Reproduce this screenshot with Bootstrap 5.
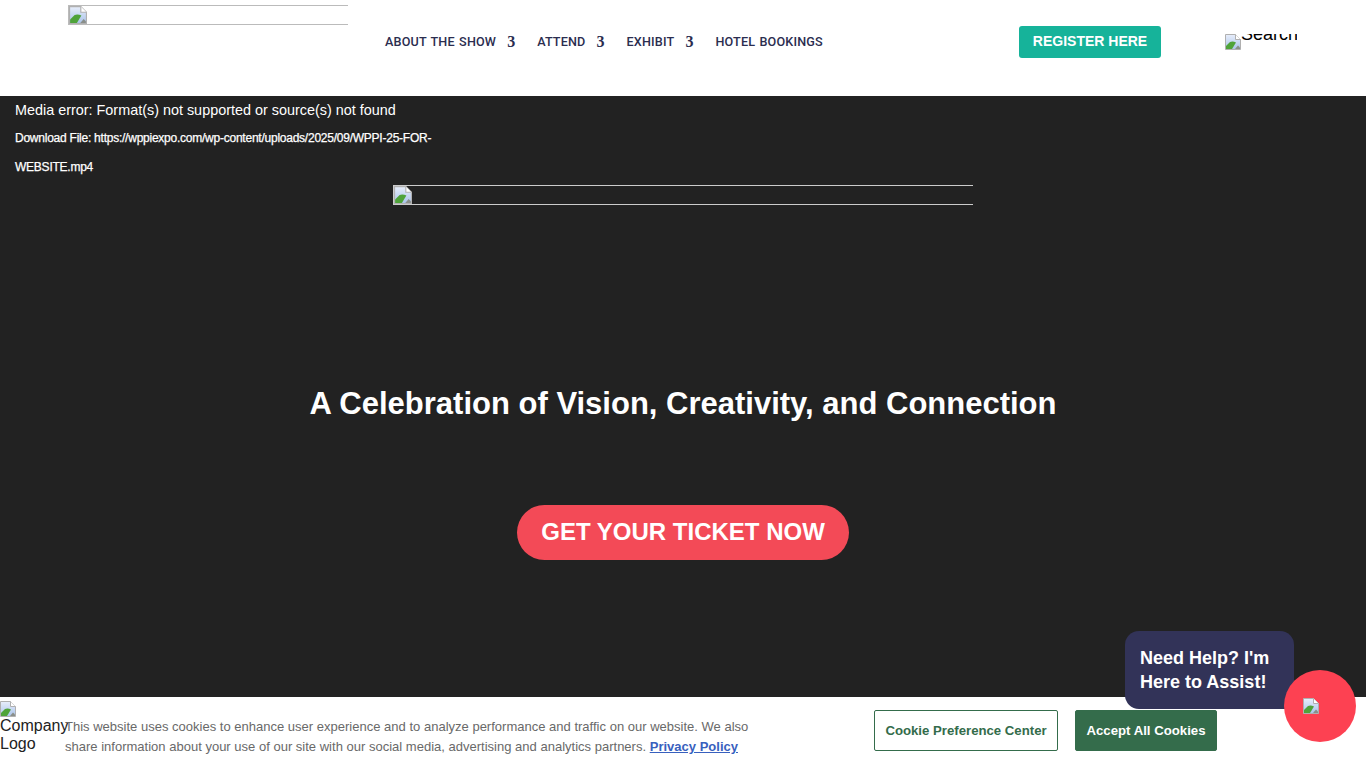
<!DOCTYPE html>
<html lang="en">
<head>
<meta charset="utf-8">
<title>WPPI</title>
<link href="https://cdn.jsdelivr.net/npm/bootstrap@5.3.0/dist/css/bootstrap.min.css" rel="stylesheet">
<style>
html,body{height:100%;overflow:hidden}
body{font-family:"Liberation Sans",Arial,sans-serif;background:#222;color:#000}
.site-head{height:96px;background:#fff}
.logo-slot{width:280px;margin-left:68px;margin-top:5px;height:20px;border:1px solid #bbb;border-right:0;flex:none;display:flex}
.top-links{margin-left:37px;margin-top:34px;height:16px}
.top-links a{font-family:Roboto,"Liberation Sans",sans-serif;font-weight:500;font-size:12.6px;color:#2b2d4f;text-decoration:none;line-height:16px;white-space:nowrap;letter-spacing:.18px;word-spacing:1px}
.caret-num{font-family:"Liberation Serif",serif;font-weight:700;font-size:16px;color:#2b2d4f;line-height:16px;margin-left:11px;margin-right:22px;width:8px}
.reg-btn{position:absolute;left:1019px;top:26px;width:142px;height:32px;background:#16b39a;color:#fff;font-weight:700;font-size:14px;border-radius:3px;border:0;padding:0 0 2px;line-height:28px;text-align:center}
.search-slot{position:absolute;left:1225px;top:34px;width:72px;height:16px;overflow:hidden;display:flex}
.search-word{font-size:18px;line-height:18px;margin-top:-9px;color:#000}
.hero-area{height:601px;background:#222;position:relative;color:#fff}
.media-err{padding:6px 0 0 15px;font-size:14.4px;line-height:17px;height:28px}
.dl-file{padding-left:15px;width:445px;font-size:12px;line-height:29px;letter-spacing:-.24px;-webkit-text-stroke:.25px #fff}
.hero-pic{width:580px;height:20px;margin:3px auto 0;border:1px solid #ccc;border-right:0;display:flex}
.hero-title{font-size:31px;font-weight:700;line-height:40px;margin:179px 0 0;text-align:center}
.hero-cta{width:332px;height:55px;border-radius:28px;background:#f34a57;color:#fff;font-weight:700;font-size:24px;border:0;padding:0 0 1px;line-height:52px;display:block;margin:81px auto 0;text-align:center}
.cookie-bar{position:fixed;left:0;right:0;bottom:0;height:71px;background:#fff;color:#333}
.co-logo{width:65px;font-size:16px;line-height:18px;padding-top:4px;color:#222;flex:none}
.co-logo svg{display:block}
.co-copy{margin-top:20px;width:700px;font-size:13px;line-height:20px;letter-spacing:.008px;color:#696969;flex:none}
.co-copy a{color:#3860be;font-weight:700}
.co-btn{position:absolute;top:13px;height:41px;font-size:13.2px;font-weight:700;border-radius:2px;padding:0;text-align:center}
.co-light{left:874px;width:184px;background:#fff;color:#346c4b;border:1px solid #346c4b}
.co-dark{left:1075px;width:142px;background:#346c4b;color:#fff;border:1px solid #346c4b}
.help-tip{position:fixed;left:1125px;top:631px;width:169px;height:78px;background:#323358;color:#fff;font-weight:700;font-size:18px;line-height:24px;border-radius:14px 14px 0 14px;padding:15px 0 0 15px}
.help-fab{position:fixed;left:1284px;top:670px;width:72px;height:72px;border-radius:50%;background:#fd4152;display:flex;padding:28px 0 0 19px}
.help-fab svg{flex:none}
</style>
</head>
<body>
<svg width="0" height="0" class="d-block" aria-hidden="true"><defs>
<linearGradient id="skyfill" x1="0" y1="0" x2="0" y2="1"><stop offset="0" stop-color="#e8eefb"/><stop offset="1" stop-color="#a9c3ea"/></linearGradient>
<symbol id="brokenpic" viewBox="0 0 16 16">
<path d="M.5.5H10.500L15.500 5.500V15.500H.5Z" fill="url(#skyfill)" stroke="#b0b0b0"/>
<path d="M10.500.5V5.500H15.500" fill="#fff" stroke="#b0b0b0"/>
<path d="M1 15V12L5 8C7 7 9 7.500 11 8.500L7 15Z" fill="#4fa33a"/>
<path d="M10 15L13 11.500L15 13.500V15Z" fill="#8a8f8a"/>
</symbol></defs></svg>

<header class="site-head d-flex position-relative">
  <div class="logo-slot"><svg width="18" height="18"><use href="#brokenpic"/></svg></div>
  <nav class="top-links d-flex align-items-center">
    <a href="#">ABOUT THE SHOW</a><span class="caret-num">3</span>
    <a href="#">ATTEND</a><span class="caret-num">3</span>
    <a href="#">EXHIBIT</a><span class="caret-num">3</span>
    <a href="#">HOTEL BOOKINGS</a>
  </nav>
  <button class="reg-btn" type="button">REGISTER HERE</button>
  <div class="search-slot"><svg width="16" height="16" class="flex-shrink-0"><use href="#brokenpic"/></svg><span class="search-word">Search</span></div>
</header>

<main class="hero-area">
  <div class="media-err">Media error: Format(s) not supported or source(s) not found</div>
  <div class="dl-file">Download File: https://wppiexpo.com/wp-content/uploads/2025/09/WPPI-25-FOR-WEBSITE.mp4</div>
  <div class="hero-pic"><svg width="18" height="18"><use href="#brokenpic"/></svg></div>
  <h1 class="hero-title">A Celebration of Vision, Creativity, and Connection</h1>
  <button class="hero-cta" type="button">GET YOUR TICKET NOW</button>
</main>

<div class="cookie-bar d-flex">
  <div class="co-logo"><svg width="16" height="16"><use href="#brokenpic"/></svg>Company Logo</div>
  <p class="co-copy">This website uses cookies to enhance user experience and to analyze performance and traffic on our website. We also share information about your use of our site with our social media, advertising and analytics partners. <a href="#">Privacy Policy</a></p>
  <button class="co-btn co-light" type="button">Cookie Preference Center</button>
  <button class="co-btn co-dark" type="button">Accept All Cookies</button>
</div>

<div class="help-tip">Need Help? I'm<br>Here to Assist!</div>
<div class="help-fab"><svg width="16" height="16"><use href="#brokenpic"/></svg></div>
</body>
</html>
